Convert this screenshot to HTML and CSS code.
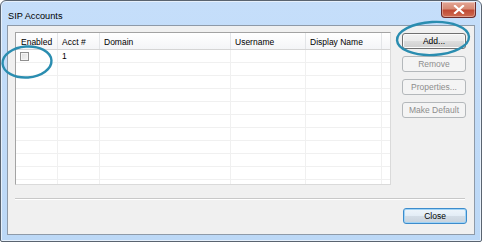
FILE: index.html
```html
<!DOCTYPE html>
<html>
<head>
<meta charset="utf-8">
<link rel="stylesheet" href="styles.css">
</head>
<body>
<div class="window">
  <div class="titlebar">
    <span class="title">SIP Accounts</span>
    <div class="close-x"><svg width="12" height="9" viewBox="0 0 12 9"><path d="M2 1 L10 8 M10 1 L2 8" stroke="#fff" stroke-width="2.2" stroke-linecap="square"/></svg></div>
  </div>
  <div class="client">
    <div class="top">
      <div class="list">
        <div class="grid head">
          <div class="cell first">Enabled</div>
          <div class="cell">Acct #</div>
          <div class="cell">Domain</div>
          <div class="cell">Username</div>
          <div class="cell">Display Name</div>
        </div>
        <div class="body">
          <div class="grid row">
            <div class="cell"><span class="check"></span></div>
            <div class="cell">1</div>
            <div class="cell"></div>
            <div class="cell"></div>
            <div class="cell"></div>
          </div>
          <div class="grid row"><div class="cell"></div><div class="cell"></div><div class="cell"></div><div class="cell"></div><div class="cell"></div></div>
          <div class="grid row"><div class="cell"></div><div class="cell"></div><div class="cell"></div><div class="cell"></div><div class="cell"></div></div>
          <div class="grid row"><div class="cell"></div><div class="cell"></div><div class="cell"></div><div class="cell"></div><div class="cell"></div></div>
          <div class="grid row"><div class="cell"></div><div class="cell"></div><div class="cell"></div><div class="cell"></div><div class="cell"></div></div>
          <div class="grid row"><div class="cell"></div><div class="cell"></div><div class="cell"></div><div class="cell"></div><div class="cell"></div></div>
          <div class="grid row"><div class="cell"></div><div class="cell"></div><div class="cell"></div><div class="cell"></div><div class="cell"></div></div>
          <div class="grid row"><div class="cell"></div><div class="cell"></div><div class="cell"></div><div class="cell"></div><div class="cell"></div></div>
          <div class="grid row"><div class="cell"></div><div class="cell"></div><div class="cell"></div><div class="cell"></div><div class="cell"></div></div>
          <div class="grid row"><div class="cell"></div><div class="cell"></div><div class="cell"></div><div class="cell"></div><div class="cell"></div></div>
          <div class="grid row last"><div class="cell"></div><div class="cell"></div><div class="cell"></div><div class="cell"></div><div class="cell"></div></div>
        </div>
      </div>
      <div class="buttons">
        <button class="btn">Add...</button>
        <button class="btn disabled">Remove</button>
        <button class="btn disabled">Properties...</button>
        <button class="btn disabled">Make Default</button>
      </div>
    </div>
    <div class="sep"></div>
    <div class="bottom">
      <button class="btn default">Close</button>
    </div>
  </div>
  <svg class="marks" width="482" height="242" viewBox="0 0 482 242">
    <ellipse cx="433" cy="38.5" rx="36" ry="16.5" transform="rotate(-3 433 38.5)" fill="none" stroke="#2a8db0" stroke-width="2.4"/>
    <ellipse cx="27" cy="62" rx="24.5" ry="15.5" transform="rotate(-4 27 62)" fill="none" stroke="#2a8db0" stroke-width="2.4"/>
  </svg>
</div>
</body>
</html>
```
FILE: styles.css
```css
html, body {
  margin: 0;
  padding: 0;
  background: #ffffff;
}
body {
  width: 482px;
  height: 242px;
  overflow: hidden;
  font-family: "Liberation Sans", Arial, sans-serif;
  font-size: 8.5px;
  color: #000;
}
.window {
  position: relative;
  width: 482px;
  height: 242px;
  box-sizing: border-box;
  border: 1px solid #5a6470;
  border-radius: 6px 6px 2px 2px;
  background: linear-gradient(#c5defa, #bcd8f6);
  padding: 0 6px 6px 6px;
  display: flex;
  flex-direction: column;
  box-shadow: inset 0 0 0 1px #e6f0fb;
}
.titlebar {
  height: 24px;
  display: flex;
  align-items: flex-start;
  justify-content: space-between;
  flex: none;
}
.title {
  font-size: 9.2px;
  margin-top: 10px;
  margin-left: 1px;
  color: #000;
}
.close-x {
  width: 35px;
  height: 16px;
  margin-top: 1px;
  margin-right: -1px;
  box-sizing: border-box;
  border: 1px solid #6b2b2b;
  border-top: none;
  border-radius: 0 0 4px 4px;
  background: linear-gradient(#e3a595 0%, #d68a74 45%, #c04a34 55%, #cf6c52 100%);
  display: flex;
  align-items: center;
  justify-content: center;
  box-shadow: inset 0 0 0 1px rgba(255,255,255,0.35);
}
.client {
  flex: 1;
  border: 1px solid #8e9aa8;
  background: #f0f0f0;
  padding: 6px 7px 8px 7px;
  display: flex;
  flex-direction: column;
}
.top {
  display: flex;
  align-items: flex-start;
}
.list {
  width: 376px;
  height: 153px;
  box-sizing: border-box;
  border: 1px solid #a0a0a0;
  border-color: #a3a3a3 #dadada #dadada #a3a3a3;
  background: #fff;
  overflow: hidden;
}
.grid {
  display: grid;
  grid-template-columns: 42px 42px 131px 75px 76px;
}
.head {
  height: 17px;
  box-sizing: border-box;
  border-bottom: 1px solid #d5d5d5;
  background: linear-gradient(#ffffff, #f4f5f7);
}
.head .cell {
  border-right: 1px solid #e3e5e8;
  padding: 4px 0 0 4px;
  line-height: 10px;
  white-space: nowrap;
}
.head .cell.first {
  padding-left: 5px;
}
.body {
  height: 134px;
  background: #fff;
}
.row {
  height: 13px;
  box-sizing: border-box;
  border-bottom: 1px solid #f0f0f0;
}
.row .cell {
  border-right: 1px solid #f0f0f0;
  padding: 1px 0 0 4px;
  line-height: 10px;
}
.row.last {
  height: 4px;
  border-bottom: none;
}
.cell {
  box-sizing: border-box;
  overflow: hidden;
}
.check {
  display: block;
  width: 9px;
  height: 9px;
  box-sizing: border-box;
  border: 1px solid #8f8f8f;
  background: linear-gradient(135deg, #dcdcdc, #f6f6f6);
  box-shadow: inset 0 0 0 1px #f4f4f4;
  margin-left: 0;
  margin-top: 1px;
}
.buttons {
  margin-left: 11px;
  display: flex;
  flex-direction: column;
  gap: 7px;
  padding-top: 1px;
}
.btn {
  width: 64px;
  height: 16px;
  padding: 0;
  box-sizing: border-box;
  font-family: "Liberation Sans", Arial, sans-serif;
  font-size: 8.5px;
  color: #000;
  border: 1px solid #707070;
  border-radius: 3px;
  background: linear-gradient(#f2f2f2 0%, #ebebeb 48%, #dddddd 52%, #cfcfcf 100%);
  box-shadow: inset 0 0 0 1px #fbfbfb;
  line-height: 13px;
}
.btn.disabled {
  color: #8d8d8d;
  border-color: #b4b8bb;
  background: #f4f4f4;
  box-shadow: none;
}
.btn.default {
  border-color: #3c8ccc;
  box-shadow: inset 0 0 0 1px #9fd3f6;
  background: linear-gradient(#eef5fb 0%, #e3edf6 48%, #d3dde7 52%, #c8d2dc 100%);
}
.sep {
  height: 1px;
  margin-top: 13px;
  margin-right: 2px;
  background: #c8c8c8;
  border-bottom: 1px solid #ffffff;
}
.bottom {
  display: flex;
  justify-content: flex-end;
  margin-top: 8px;
}
.marks {
  position: absolute;
  left: -1px;
  top: -1px;
  pointer-events: none;
}
```
